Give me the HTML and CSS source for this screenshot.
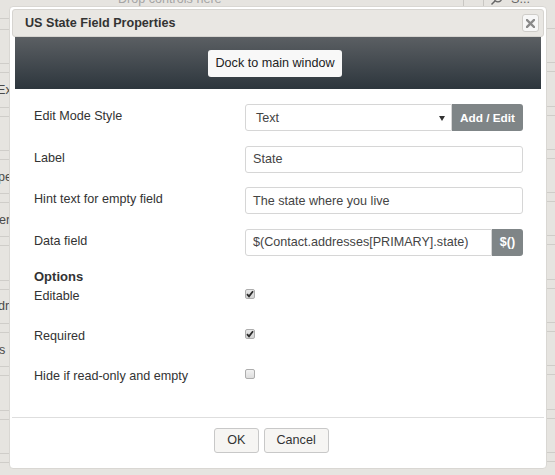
FILE: index.html
```html
<!DOCTYPE html>
<html>
<head>
<meta charset="utf-8">
<link rel="stylesheet" href="styles.css">
</head>
<body>
<div class="page">
  <aside class="side side-left">
    <div class="row row-first"></div>
    <div class="row"></div>
    <div class="row"><span class="cut cut-ex">Ex</span></div>
    <div class="row"></div>
    <div class="row"><span class="cut cut-pe">pe</span></div>
    <div class="row"><span class="cut cut-ers">ers</span></div>
    <div class="row"></div>
    <div class="row"><span class="cut cut-dr">dr</span></div>
    <div class="row"><span class="cut cut-s">s</span></div>
    <div class="row"></div>
    <div class="row"></div>
    <div class="row"></div>
  </aside>
  <main class="center">
    <div class="topbar">
      <div class="drop">Drop controls here</div>
      <div class="tool tool-blank"></div>
      <div class="tool tool-search">
        <svg class="search-icon" width="13" height="13" viewBox="0 0 13 13"><circle cx="8" cy="5" r="3.8" fill="none" stroke="#666" stroke-width="1.3"/><line x1="5.2" y1="7.8" x2="1.5" y2="11.5" stroke="#666" stroke-width="1.5"/></svg>
        <span>S...</span>
      </div>
    </div>
  </main>
  <aside class="side side-right">
    <div class="row row-first row-scroll"></div>
    <div class="row"></div>
    <div class="row"></div>
    <div class="row"></div>
    <div class="row"></div>
    <div class="row"></div>
    <div class="row"></div>
    <div class="row"></div>
    <div class="row"></div>
    <div class="row"></div>
    <div class="row"></div>
    <div class="row"></div>
  </aside>
</div>

<div class="dialog">
  <div class="titlebar">
    <span class="title">US State Field Properties</span>
    <button class="close" type="button">
      <svg width="9" height="9" viewBox="0 0 9 9"><path d="M1 1 L8 8 M8 1 L1 8" stroke="#8a8a8a" stroke-width="2.4" stroke-linecap="square"/></svg>
    </button>
  </div>
  <div class="content">
    <div class="dockbar"><button class="dock" type="button">Dock to main window</button></div>
    <div class="form">
      <div class="field">
        <div class="field-label">Edit Mode Style</div>
        <div class="control">
          <div class="input select"><span>Text</span><span class="arrow"></span></div>
          <button class="addon addon-edit" type="button">Add / Edit</button>
        </div>
      </div>
      <div class="field">
        <div class="field-label">Label</div>
        <div class="control"><div class="input">State</div></div>
      </div>
      <div class="field">
        <div class="field-label">Hint text for empty field</div>
        <div class="control"><div class="input">The state where you live</div></div>
      </div>
      <div class="field">
        <div class="field-label">Data field</div>
        <div class="control">
          <div class="input input-joined">$(Contact.addresses[PRIMARY].state)</div>
          <button class="addon addon-expr" type="button">$()</button>
        </div>
      </div>
      <div class="options-title">Options</div>
      <div class="option">
        <span class="opt-label">Editable</span>
        <span class="check checked"><svg width="8" height="8" viewBox="0 0 8 8"><path d="M1 4.2 L3 6.4 L7 1.2" fill="none" stroke="#2b2b2b" stroke-width="1.8"/></svg></span>
      </div>
      <div class="option">
        <span class="opt-label">Required</span>
        <span class="check checked"><svg width="8" height="8" viewBox="0 0 8 8"><path d="M1 4.2 L3 6.4 L7 1.2" fill="none" stroke="#2b2b2b" stroke-width="1.8"/></svg></span>
      </div>
      <div class="option">
        <span class="opt-label">Hide if read-only and empty</span>
        <span class="check"></span>
      </div>
    </div>
  </div>
  <div class="footer">
    <button class="btn" type="button">OK</button>
    <button class="btn" type="button">Cancel</button>
  </div>
</div>
</body>
</html>
```

FILE: styles.css
```css
html, body {
  margin: 0;
  padding: 0;
}

body {
  width: 555px;
  height: 475px;
  overflow: hidden;
  background: #e6e4e0;
  font-family: "Liberation Sans", Arial, sans-serif;
  font-size: 12.6px;
  color: #333;
}

.page {
  display: flex;
  height: 475px;
}

.side {
  flex: none;
  width: 9px;
}

.side-right {
  width: 8px;
}

.row {
  height: 33.3px;
  border-top: 1px solid #cfcdc9;
  border-bottom: 1px solid #cfcdc9;
  margin-bottom: 8px;
  display: flex;
  align-items: center;
  white-space: nowrap;
  color: #4a4a4a;
}

.row-first {
  height: 18px;
  border-top: none;
  margin-bottom: 10px;
}

.row-scroll {
  border-bottom: none;
}

.cut {
  display: block;
}

.cut-ex { margin-left: -3px; }
.cut-pe { margin-left: -2px; }
.cut-ers { margin-left: -1px; }
.cut-dr { margin-left: -2px; }
.cut-s { margin-left: -1px; }

.center {
  flex: 1;
  min-width: 0;
}

.topbar {
  display: flex;
  margin-top: -8px;
  height: 15px;
  line-height: 15px;
  color: #a5a5a5;
}

.drop {
  flex: 1;
  margin-left: 109px;
}

.tool {
  flex: none;
  border-left: 1px solid #c9c7c3;
  box-sizing: border-box;
}

.tool-blank {
  width: 20px;
}

.tool-search {
  width: 64px;
  display: flex;
  align-items: flex-end;
  gap: 8px;
  padding-left: 6px;
  color: #666;
}

.search-icon {
  margin-bottom: 1px;
}

/* dialog overlay */
.dialog {
  position: absolute;
  left: 9px;
  top: 6px;
  width: 538px;
  box-sizing: border-box;
  background: #fff;
  border: 1px solid #d9d7d3;
  border-radius: 4px;
  padding: 2px;
}

.titlebar {
  height: 28px;
  box-sizing: border-box;
  border: 1px solid #d6d4d0;
  background: #e9e7e3;
  border-radius: 3px;
  display: flex;
  align-items: center;
  justify-content: space-between;
  padding: 0 4px 0 12px;
}

.title {
  font-weight: bold;
  color: #333;
}

.close {
  width: 17px;
  height: 18px;
  box-sizing: border-box;
  border: 1px solid #cfcdc9;
  background: #f7f7f7;
  border-radius: 3px;
  padding: 0;
  display: flex;
  align-items: center;
  justify-content: center;
}

.content {
  padding: 0 3px;
}

.dockbar {
  height: 52px;
  background: linear-gradient(#5b5f63, #2d363d);
  display: flex;
  align-items: center;
  justify-content: center;
}

.dock {
  height: 27px;
  padding: 0 7.5px;
  margin-right: 6px;
  font-family: inherit;
  font-size: 12.6px;
  color: #222;
  background: #f8f8f8;
  border: none;
  border-radius: 3px;
}

.form {
  padding: 15px 18px 7.6px 19px;
}

.field {
  display: flex;
  height: 27px;
  margin-bottom: 14.67px;
}

.field:nth-child(4) {
  margin-bottom: 0;
}

.field-label {
  flex: none;
  width: 211px;
  padding-top: 5px;
}

.control {
  flex: 1;
  display: flex;
}

.input {
  flex: 1;
  height: 27px;
  box-sizing: border-box;
  border: 1px solid #d6d6d6;
  border-radius: 3px;
  padding: 0 7px;
  display: flex;
  align-items: center;
  color: #444;
  white-space: nowrap;
}

.select {
  justify-content: space-between;
  padding: 0 6px 0 10px;
  border-radius: 3px 0 0 3px;
}

.arrow {
  width: 0;
  height: 0;
  border-left: 3px solid transparent;
  border-right: 3px solid transparent;
  border-top: 5px solid #333;
  margin-top: 1px;
}

.input-joined {
  border-radius: 3px 0 0 3px;
}

.addon {
  flex: none;
  height: 27px;
  padding: 0;
  border: none;
  border-radius: 0 3px 3px 0;
  background: #7f8587;
  color: #fff;
  font-family: inherit;
  font-weight: bold;
  font-size: 11.8px;
}

.addon-edit {
  width: 71px;
}

.addon-expr {
  width: 31px;
  font-size: 12.6px;
}

.options-title {
  font-weight: bold;
  font-size: 13px;
  line-height: 15px;
  margin-top: 13.2px;
  margin-bottom: 5.2px;
}

.option {
  display: flex;
  align-items: flex-start;
  height: 40px;
}

.opt-label {
  flex: none;
  width: 211px;
  line-height: 14.5px;
}

.check {
  width: 10px;
  height: 10px;
  box-sizing: border-box;
  margin-top: 0;
  border: 1px solid #adadad;
  border-radius: 2px;
  background: linear-gradient(#f2f2f2, #dedede);
  display: flex;
  align-items: center;
  justify-content: center;
}

.check.checked {
  background: linear-gradient(#e8e8e8, #d4d4d4);
}

.footer {
  border-top: 1px solid #dedede;
  padding: 10px 13px 13px 0;
  display: flex;
  justify-content: center;
  gap: 5px;
}

.btn {
  height: 25px;
  padding: 0 12px;
  font-family: inherit;
  font-size: 12.6px;
  color: #333;
  background: #f6f5f3;
  border: 1px solid #c8c8c8;
  border-radius: 3px;
}
```
